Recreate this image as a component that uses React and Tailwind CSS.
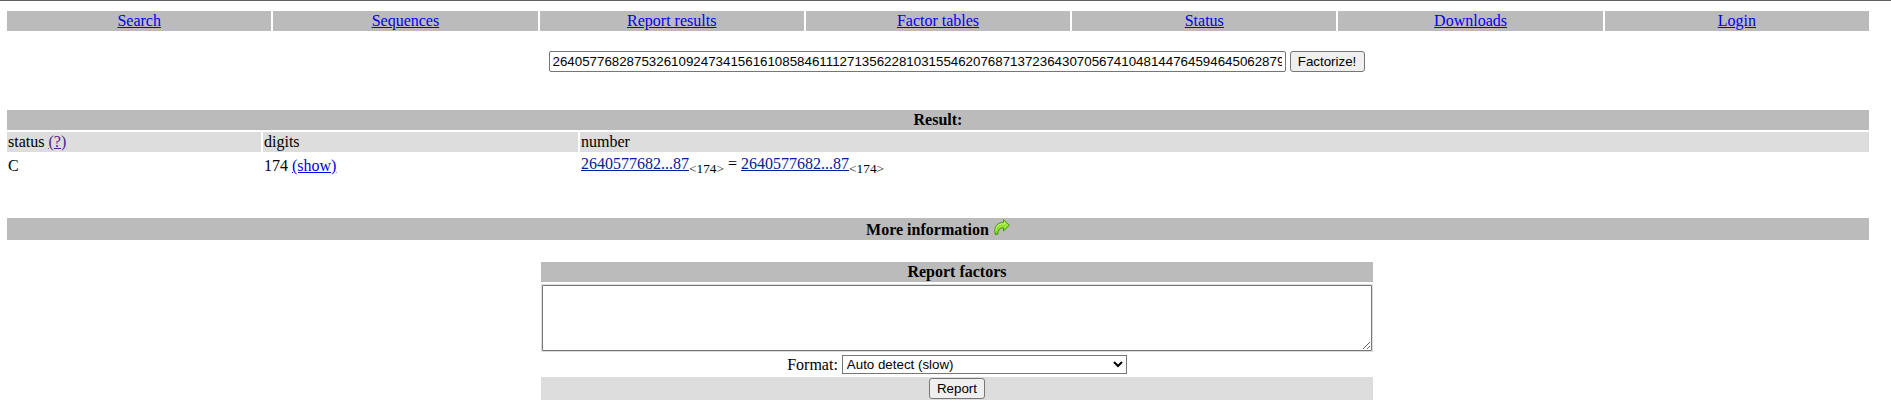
const NAV = ['Search', 'Sequences', 'Report results', 'Factor tables', 'Status', 'Downloads', 'Login'];
const NUMBER =
  '264057768287532610924734156161085846111271356228103155462076871372364307056741048144764594645062879';

const field = 'border border-[#767676] bg-white font-[Liberation_Sans,sans-serif] text-[13.333px] text-black';
const button =
  'rounded-[3px] border border-[#767676] bg-[#efefef] font-[Liberation_Sans,sans-serif] text-[13.333px] leading-[15px] text-black';

function Link({ children, className = 'text-[#0000ee]' }) {
  return <a href="#" className={`underline ${className}`}>{children}</a>;
}

function NumberLink() {
  return (
    <>
      <Link className="text-[#002099]">2640577682...87</Link>
      <span className="relative top-[4px] text-[13.333px] leading-none">&lt;174&gt;</span>
    </>
  );
}

function ArrowIcon() {
  return (
    <svg width="16" height="16" viewBox="0 0 16 16" className="mb-1 ml-[5px]">
      <defs>
        <linearGradient id="leaf" x1="0" y1="0" x2="0" y2="1">
          <stop offset="0" stopColor="#b5ee55" />
          <stop offset="1" stopColor="#6fd40c" />
        </linearGradient>
      </defs>
      <path
        d="M9.5 .7 15.4 6.3 9.5 12V9C6.2 8.8 4.3 10.2 3.6 15.4H1.2C-.4 7.5 3 3.6 9.5 3.6Z"
        fill="url(#leaf)"
        stroke="#489514"
        strokeLinejoin="round"
      />
      <path d="M10.4 3.2V4.6C5 4.6 1.6 7 1.9 12.5" fill="none" stroke="#d2f68c" strokeWidth=".8" />
    </svg>
  );
}

export default function App() {
  return (
    <div className="h-[410px] overflow-hidden border-t border-[#5f5f66] bg-white pt-[10px] pr-[22px] pl-[7px] font-[Liberation_Serif,serif] text-base leading-[18px] text-black">
      <nav className="grid grid-cols-7 gap-[2px]">
        {NAV.map((item) => (
          <div key={item} className="h-5 bg-[#bbbbbb] py-px text-center">
            <Link>{item}</Link>
          </div>
        ))}
      </nav>

      <form className="mt-5 flex h-[21px] justify-center gap-1 pl-[37px]">
        <input defaultValue={NUMBER} className={`${field} h-[21px] w-[737px] rounded-[2px] px-[3px]`} />
        <button type="button" className={`${button} h-[21px] w-[75px]`}>Factorize!</button>
      </form>

      <section className="mt-[38px]">
        <h2 className="h-5 bg-[#bbbbbb] py-px text-center font-bold">Result:</h2>
        <div className="mt-[2px] grid grid-cols-[254px_315px_1fr] gap-[2px]">
          <div className="h-5 bg-[#dddddd] p-px">status <Link className="text-[#551a8b]">(?)</Link></div>
          <div className="h-5 bg-[#dddddd] p-px">digits</div>
          <div className="h-5 bg-[#dddddd] p-px">number</div>
          <div className="h-6 px-px py-[3px]">C</div>
          <div className="h-6 px-px py-[3px]">174 <Link>(show)</Link></div>
          <div className="h-6 p-px"><NumberLink /> = <NumberLink /></div>
        </div>
      </section>

      <h2 className="mt-10 flex h-[22px] items-center justify-center bg-[#bbbbbb] font-bold">
        <span className="pt-px">More information</span>
        <ArrowIcon />
      </h2>

      <section className="mt-[22px] ml-[534px] w-[832px]">
        <h2 className="h-5 bg-[#bbbbbb] py-px text-center font-bold">Report factors</h2>
        <div className="mt-[2px] h-[68px] bg-[#dddddd] p-px">
          <textarea className={`${field} block h-[66px] w-full rounded-[1px]`} />
        </div>
        <div className="mt-[2px] flex h-[21px] items-center justify-center gap-1">
          <span>Format:</span>
          <select className={`${field} h-[19px] w-[285px]`}>
            <option>Auto detect (slow)</option>
          </select>
        </div>
        <div className="mt-[2px] flex h-[23px] items-center justify-center bg-[#dddddd]">
          <button type="button" className={`${button} h-[21px] w-14`}>Report</button>
        </div>
      </section>
    </div>
  );
}
